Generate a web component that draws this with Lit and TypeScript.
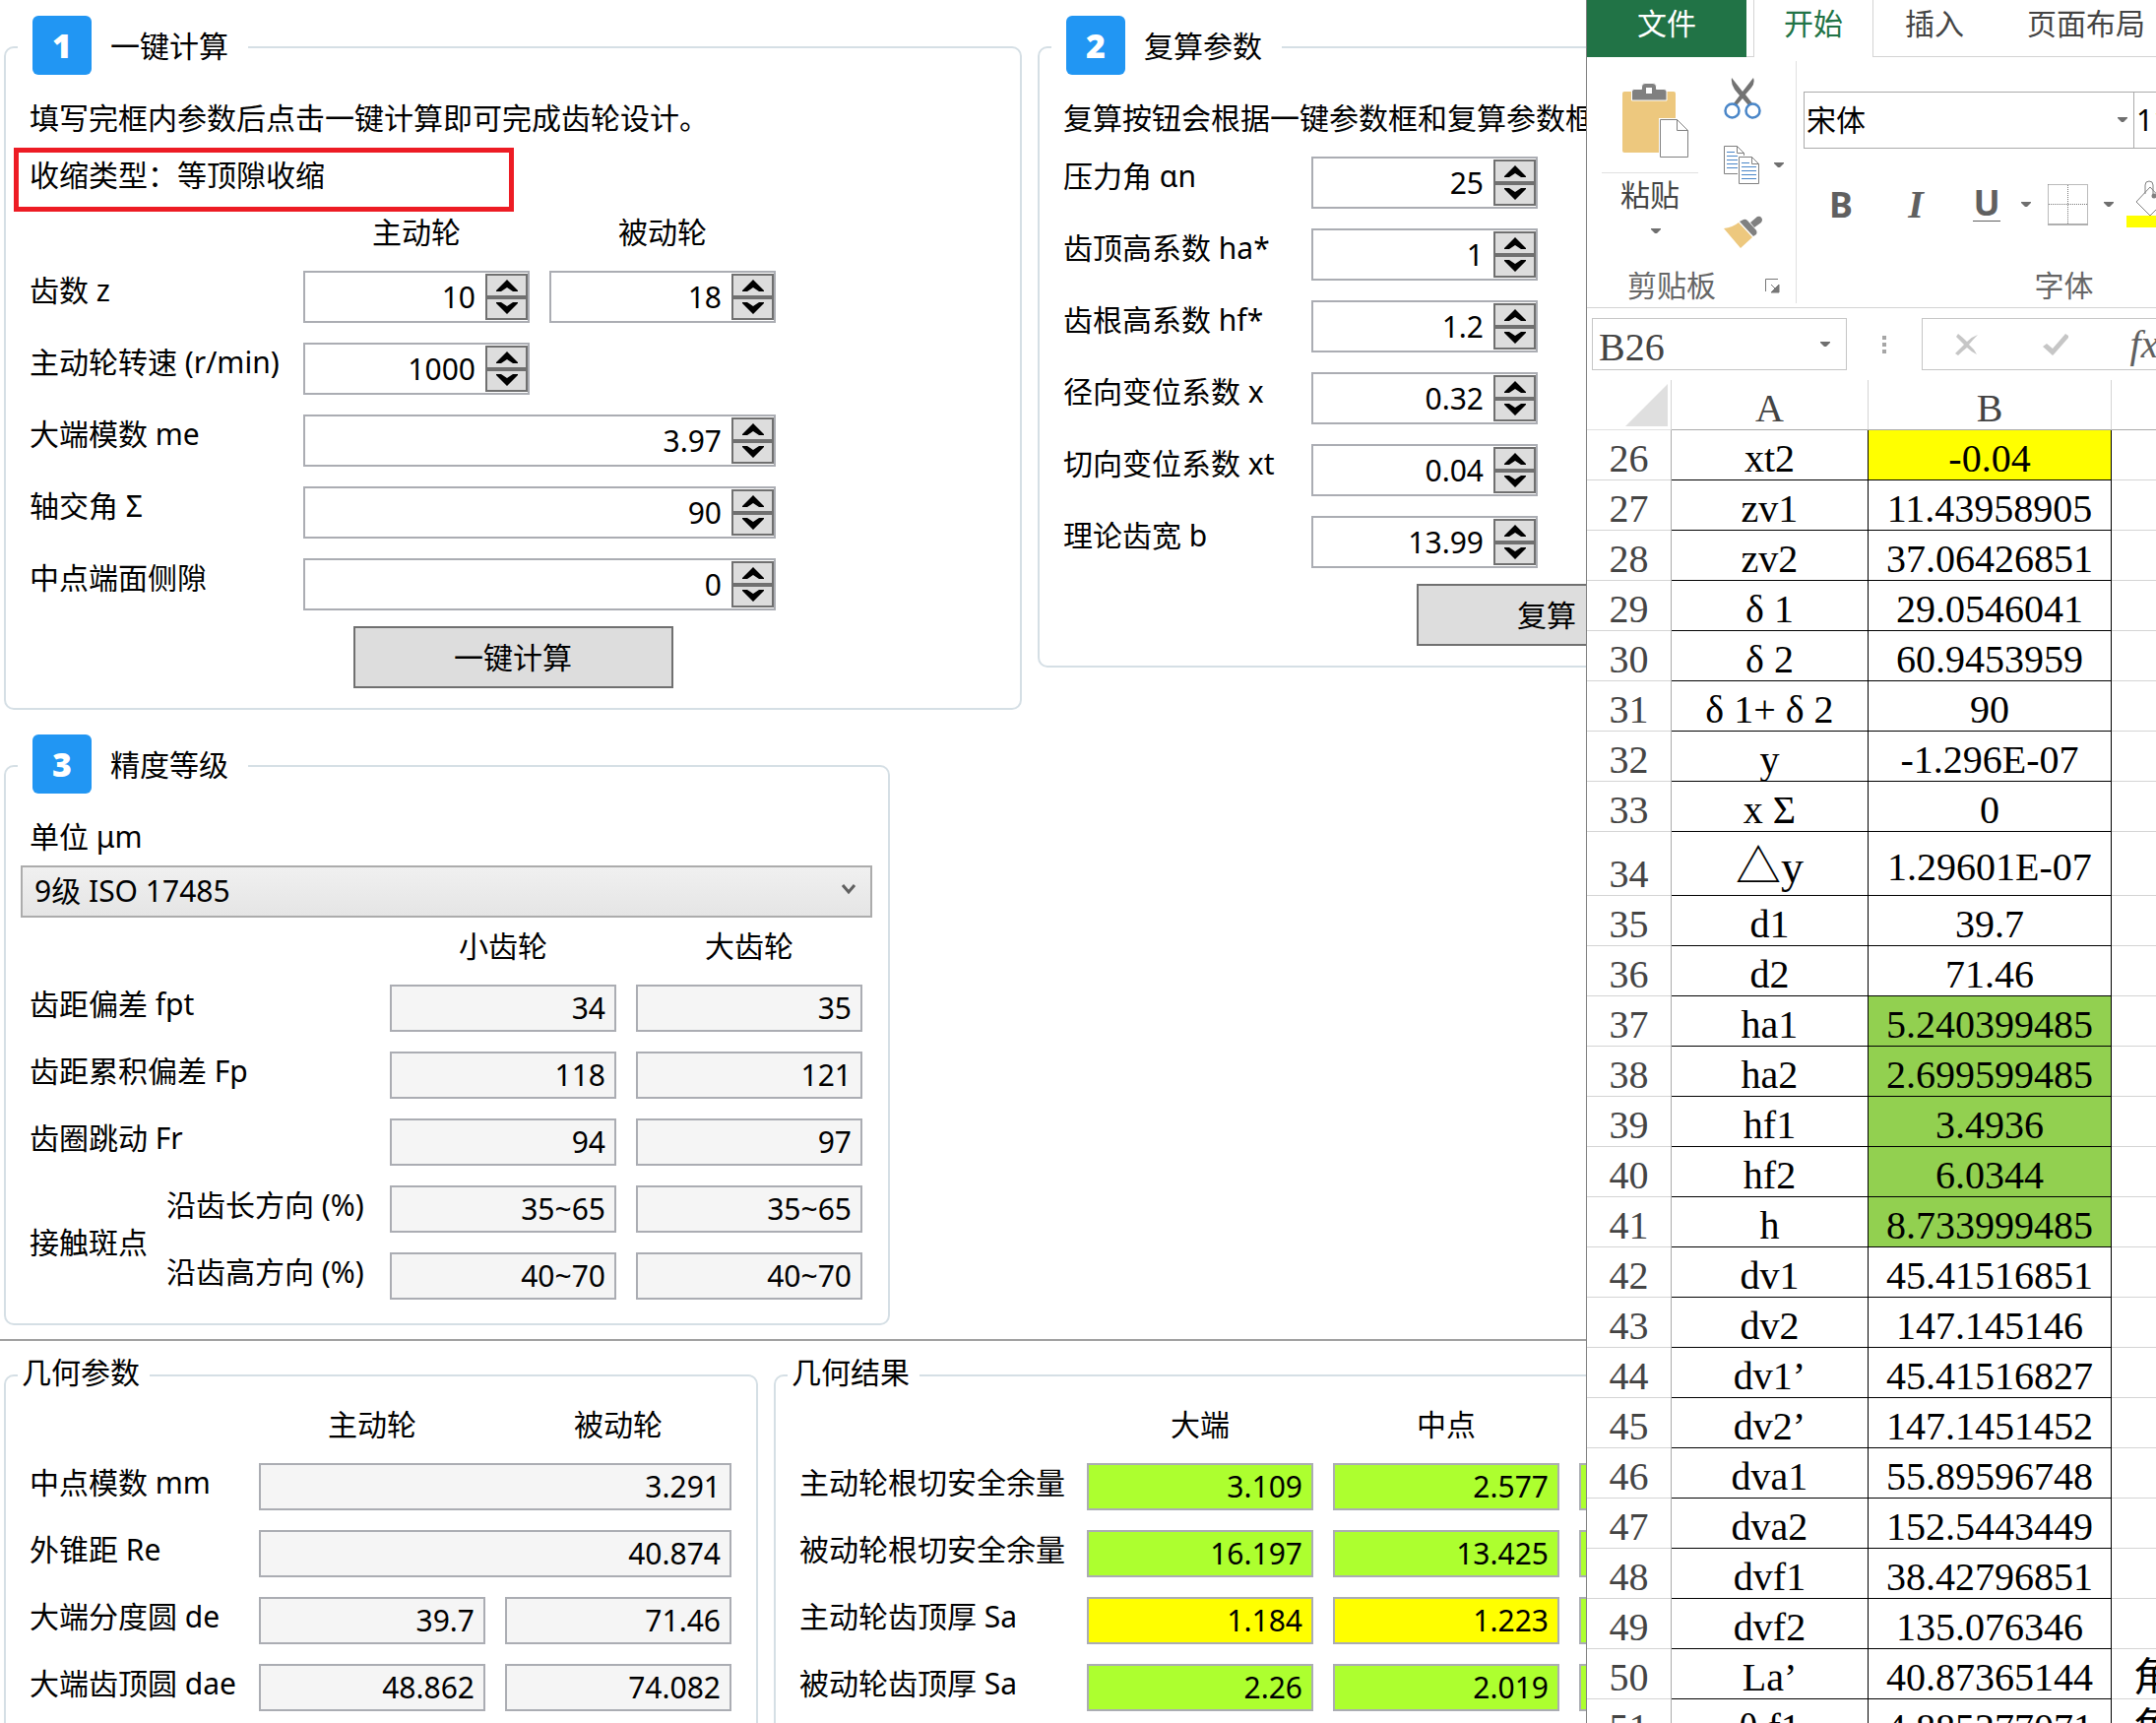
import { LitElement, html, css, svg, nothing } from "lit";
import { customElement } from "lit/decorators.js";
import { classMap } from "lit/directives/class-map.js";

type Tone = "plain" | "ok" | "warn";

interface SpinRow {
  id: string;
  label: string;
  values: string[];
  wide?: boolean;
}

interface ReadRow {
  id: string;
  label: string;
  values: string[];
  tone?: Tone;
}

interface SheetRow {
  n: number;
  name: string;
  value: string;
  fill?: "yellow" | "green";
  tall?: boolean;
  note?: string;
}

const quickRows: SpinRow[] = [
  { id: "z", label: "齿数 z", values: ["10", "18"] },
  { id: "rpm", label: "主动轮转速 (r/min)", values: ["1000"] },
  { id: "me", label: "大端模数 me", values: ["3.97"], wide: true },
  { id: "sigma", label: "轴交角 Σ", values: ["90"], wide: true },
  { id: "backlash", label: "中点端面侧隙", values: ["0"], wide: true },
];

const reviewRows: SpinRow[] = [
  { id: "an", label: "压力角 αn", values: ["25"] },
  { id: "ha", label: "齿顶高系数 ha*", values: ["1"] },
  { id: "hf", label: "齿根高系数 hf*", values: ["1.2"] },
  { id: "x", label: "径向变位系数 x", values: ["0.32"] },
  { id: "xt", label: "切向变位系数 xt", values: ["0.04"] },
  { id: "b", label: "理论齿宽 b", values: ["13.99"] },
];

const gradeRows: ReadRow[] = [
  { id: "fpt", label: "齿距偏差 fpt", values: ["34", "35"] },
  { id: "fp", label: "齿距累积偏差 Fp", values: ["118", "121"] },
  { id: "fr", label: "齿圈跳动 Fr", values: ["94", "97"] },
];

const contactRows: ReadRow[] = [
  { id: "along", label: "沿齿长方向 (%)", values: ["35~65", "35~65"] },
  { id: "high", label: "沿齿高方向 (%)", values: ["40~70", "40~70"] },
];

const geometryRows: ReadRow[] = [
  { id: "mm", label: "中点模数 mm", values: ["3.291"] },
  { id: "re", label: "外锥距 Re", values: ["40.874"] },
  { id: "de", label: "大端分度圆 de", values: ["39.7", "71.46"] },
  { id: "dae", label: "大端齿顶圆 dae", values: ["48.862", "74.082"] },
];

const resultRows: ReadRow[] = [
  { id: "cut1", label: "主动轮根切安全余量", values: ["3.109", "2.577", ""], tone: "ok" },
  { id: "cut2", label: "被动轮根切安全余量", values: ["16.197", "13.425", ""], tone: "ok" },
  { id: "sa1", label: "主动轮齿顶厚 Sa", values: ["1.184", "1.223", ""], tone: "warn" },
  { id: "sa2", label: "被动轮齿顶厚 Sa", values: ["2.26", "2.019", ""], tone: "ok" },
];

const sheetRows: SheetRow[] = [
  { n: 26, name: "xt2", value: "-0.04", fill: "yellow" },
  { n: 27, name: "zv1", value: "11.43958905" },
  { n: 28, name: "zv2", value: "37.06426851" },
  { n: 29, name: "δ 1", value: "29.0546041" },
  { n: 30, name: "δ 2", value: "60.9453959" },
  { n: 31, name: "δ 1+ δ 2", value: "90" },
  { n: 32, name: "y", value: "-1.296E-07" },
  { n: 33, name: "x Σ", value: "0" },
  { n: 34, name: "△y", value: "1.29601E-07", tall: true },
  { n: 35, name: "d1", value: "39.7" },
  { n: 36, name: "d2", value: "71.46" },
  { n: 37, name: "ha1", value: "5.240399485", fill: "green" },
  { n: 38, name: "ha2", value: "2.699599485", fill: "green" },
  { n: 39, name: "hf1", value: "3.4936", fill: "green" },
  { n: 40, name: "hf2", value: "6.0344", fill: "green" },
  { n: 41, name: "h", value: "8.733999485", fill: "green" },
  { n: 42, name: "dv1", value: "45.41516851" },
  { n: 43, name: "dv2", value: "147.145146" },
  { n: 44, name: "dv1’", value: "45.41516827" },
  { n: 45, name: "dv2’", value: "147.1451452" },
  { n: 46, name: "dva1", value: "55.89596748" },
  { n: 47, name: "dva2", value: "152.5443449" },
  { n: 48, name: "dvf1", value: "38.42796851" },
  { n: 49, name: "dvf2", value: "135.076346" },
  { n: 50, name: "La’", value: "40.87365144", note: "角" },
  { n: 51, name: "θ f1", value: "4.885277071", note: "角" },
];

const caret = html`<svg class="caret" width="10" height="6" viewBox="0 0 10 6" aria-hidden="true">
  <path d="M0 0H10V1L6 5H4L0 1Z" fill="#6f6f6f" />
</svg>`;

const base = css`
  :host {
    font-family: "Noto Sans", "Noto Sans CJK SC", sans-serif;
    font-size: 30px;
    color: #000;
  }
  *,
  *::before,
  *::after {
    box-sizing: border-box;
  }
  button,
  input,
  select {
    font: inherit;
    color: inherit;
    margin: 0;
    padding: 0;
    border: 0;
    border-radius: 0;
    background: none;
    appearance: none;
    outline: none;
  }
`;

@customElement("gear-calculator")
export class GearCalculator extends LitElement {
  static styles = [
    base,
    css`
      :host {
        display: block;
        overflow: hidden;
        background: #fff;
        white-space: nowrap;
      }
      .top {
        display: grid;
        grid-template-columns: 1034px 1034px;
        column-gap: 16px;
        row-gap: 24px;
        align-items: start;
        padding: 15px 0 14px 4px;
      }
      .bottom {
        display: grid;
        grid-template-columns: 766px 1100px;
        column-gap: 16px;
        padding: 14px 0 0 4px;
        border-top: 2px solid #a0a0a0;
      }
      fieldset {
        margin: 0;
        min-width: 0;
        padding: 0 12px 20px;
        border: 2px solid #d5dfe5;
        border-radius: 10px;
      }
      legend {
        display: flex;
        height: 66px;
        gap: 19px;
        padding: 1px 20px 0 15px;
        line-height: 62px;
      }
      .bottom legend {
        height: 42px;
        padding: 0 10px 0 4px;
        line-height: 36px;
      }
      .badge {
        width: 60px;
        height: 60px;
        border-radius: 6px;
        background: #2196f3;
        color: #fff;
        font-family: "Open Sans", "Noto Sans", sans-serif;
        font-weight: 800;
        font-size: 34px;
        line-height: 60px;
        text-align: center;
      }
      .body {
        padding: 10px 0 0 12px;
      }
      .bottom .body {
        padding-top: 0;
      }
      .bottom fieldset {
        padding-bottom: 60px;
      }
      p {
        margin: 0;
        line-height: 58px;
        height: 58px;
      }
      .kind {
        position: relative;
      }
      .kind::after {
        content: "";
        position: absolute;
        left: -16px;
        top: 1px;
        width: 508px;
        height: 65px;
        border: 5px solid #ed1c24;
      }
      .grid {
        display: grid;
        align-items: center;
      }
      .quick {
        grid-template-columns: 268px 250px 250px;
      }
      .review {
        grid-template-columns: 242px 250px;
      }
      .grade {
        grid-template-columns: 139px 217px 250px 250px;
      }
      .geometry {
        grid-template-columns: 223px 250px 250px;
      }
      .result {
        grid-template-columns: 282px 250px 250px 250px;
      }
      .head {
        height: 58px;
        line-height: 58px;
        text-align: center;
      }
      .first {
        grid-column-start: 1;
      }
      .second {
        grid-column-start: 2;
      }
      .third {
        grid-column-start: 3;
      }
      .two {
        grid-column-end: span 2;
      }
      .tallcell {
        grid-column: 1;
        grid-row: 5 / span 2;
        padding-bottom: 4px;
      }
      label {
        padding-bottom: 12px;
      }
      .quick label,
      .review label {
        padding-bottom: 18px;
      }
      .spin {
        display: flex;
        height: 53px;
        margin: 10px;
        padding: 1px 0 1px 1px;
        border: 2px solid #abadb3;
        background: #fff;
      }
      .spin input {
        flex: 1;
        min-width: 0;
        padding-right: 10px;
        text-align: right;
      }
      .steps {
        display: flex;
        flex-direction: column;
        width: 43px;
      }
      .steps button {
        display: flex;
        flex: 1;
        align-items: center;
        justify-content: center;
        min-height: 0;
        border: 2px solid #707070;
        background: #ddd;
      }
      .out {
        width: 230px;
        height: 48px;
        margin: 10px;
        padding: 0 9px 1px 0;
        border: 2px solid #abadb3;
        background: #f5f5f5;
        text-align: right;
      }
      .out.two {
        width: 480px;
      }
      .out.ok {
        background: #adff2f;
      }
      .out.warn {
        background: #ff0;
      }
      .go {
        display: block;
        width: 325px;
        height: 63px;
        margin: 6px auto 0;
        padding-bottom: 4px;
        border: 2px solid #707070;
        background: #ddd;
      }
      .actions {
        padding-right: 12px;
      }
      .go.short {
        width: 264px;
      }
      .grade-set {
        width: 900px;
        padding-bottom: 14px;
      }
      .combo {
        display: grid;
        align-items: center;
        width: 865px;
        margin-left: -9px;
      }
      .combo > * {
        grid-area: 1 / 1;
      }
      .combo select {
        height: 53px;
        padding: 0 0 2px 12px;
        border: 2px solid #acacac;
        background: linear-gradient(#f0f0f0, #e5e5e5);
      }
      .combo svg {
        justify-self: end;
        margin: 0 16px 6px 0;
        pointer-events: none;
      }
    `,
  ];

  private spin(id: string, value: string, name: string, wide = false) {
    return html`<div class=${classMap({ spin: true, two: wide })}>
      <input id=${id} type="text" inputmode="decimal" .value=${value} aria-label=${name} />
      <span class="steps">
        <button type="button" aria-label="增加">
          <svg width="22" height="12" viewBox="0 0 22 12"><path d="M11 0L22 11V12H17L11 8L5 12H0V11Z" /></svg>
        </button>
        <button type="button" aria-label="减少">
          <svg width="22" height="12" viewBox="0 0 22 12"><path d="M11 12L22 1V0H17L11 4L5 0H0V1Z" /></svg>
        </button>
      </span>
    </div>`;
  }

  private spinRow(row: SpinRow) {
    return html`<label class="first" for=${row.id + "-0"}>${row.label}</label>
      ${row.values.map((v, i) => this.spin(`${row.id}-${i}`, v, row.label, row.wide))}`;
  }

  private outputs(row: ReadRow, span = false) {
    return row.values.map((v, i) => {
      const tone = row.id === "sa1" && i === 2 ? "ok" : row.tone;
      return html`<input
        id=${`${row.id}-${i}`}
        class=${classMap({ out: true, two: span, ok: tone === "ok", warn: tone === "warn" })}
        type="text"
        readonly
        .value=${v}
        aria-label=${row.label}
      />`;
    });
  }

  private readRow(row: ReadRow, labelSpan = false, spanSingle = false) {
    return html`<label class=${classMap({ first: true, two: labelSpan })} for=${row.id + "-0"}>${row.label}</label>
      ${this.outputs(row, spanSingle && row.values.length === 1)}`;
  }

  render() {
    return html`
      <section class="top">
        <fieldset>
          <legend><span class="badge">1</span>一键计算</legend>
          <div class="body">
            <p>填写完框内参数后点击一键计算即可完成齿轮设计。</p>
            <p class="kind">收缩类型：等顶隙收缩</p>
            <div class="grid quick">
              <span class="head second">主动轮</span>
              <span class="head">被动轮</span>
              ${quickRows.map((r) => this.spinRow(r))}
            </div>
            <div class="actions"><button class="go" type="button">一键计算</button></div>
          </div>
        </fieldset>
        <fieldset>
          <legend><span class="badge">2</span>复算参数</legend>
          <div class="body">
            <p>复算按钮会根据一键参数框和复算参数框</p>
            <div class="grid review">${reviewRows.map((r) => this.spinRow(r))}</div>
            <div class="actions"><button class="go short" type="button">复算</button></div>
          </div>
        </fieldset>
        <fieldset class="grade-set">
          <legend><span class="badge">3</span>精度等级</legend>
          <div class="body">
            <p>单位 μm</p>
            <div class="combo">
              <select aria-label="精度等级">
                <option>9级 ISO 17485</option>
              </select>
              <svg width="16" height="12" viewBox="0 0 16 12" aria-hidden="true">
                <path d="M2 2L8 9L14 2" fill="none" stroke="#606060" stroke-width="3" />
              </svg>
            </div>
            <div class="grid grade">
              <span class="head third">小齿轮</span>
              <span class="head">大齿轮</span>
              ${gradeRows.map((r) => this.readRow(r, true))}
              <span class="tallcell">接触斑点</span>
              ${contactRows.map(
                (r) => html`<label class="second" for=${r.id + "-0"}>${r.label}</label>${this.outputs(r)}`
              )}
            </div>
          </div>
        </fieldset>
      </section>
      <section class="bottom">
        <fieldset>
          <legend>几何参数</legend>
          <div class="body grid geometry">
            <span class="head second">主动轮</span>
            <span class="head">被动轮</span>
            ${geometryRows.map((r) => this.readRow(r, false, true))}
          </div>
        </fieldset>
        <fieldset>
          <legend>几何结果</legend>
          <div class="body grid result">
            <span class="head second">大端</span>
            <span class="head">中点</span>
            ${resultRows.map((r) => this.readRow(r))}
          </div>
        </fieldset>
      </section>
    `;
  }
}

@customElement("sheet-window")
export class SheetWindow extends LitElement {
  static styles = [
    base,
    css`
      :host {
        display: block;
        overflow: hidden;
        border-left: 1px solid #808080;
        background: #fff;
        color: #444;
        white-space: nowrap;
      }
      .tabs {
        display: flex;
        height: 58px;
      }
      .tabs button {
        flex: none;
        padding: 0 32px 20px;
        border-bottom: 1px solid #d4d4d4;
      }
      .tabs .file {
        width: 162px;
        border: 0;
        background: #217346;
        color: #fff;
      }
      .tabs .gap {
        flex: none;
        width: 7px;
        border-bottom: 1px solid #d4d4d4;
      }
      .tabs .active {
        width: 122px;
        padding: 0 0 20px;
        border: solid #d4d4d4;
        border-width: 0 1px;
        color: #217346;
      }
      .tabs .rest {
        flex: 1;
        border-bottom: 1px solid #d4d4d4;
      }
      .ribbon {
        display: flex;
        height: 255px;
        padding: 4px 0;
        border-bottom: 1px solid #d4d4d4;
      }
      .group {
        display: flex;
        flex: none;
        flex-direction: column;
        justify-content: space-between;
        border-right: 1px solid #e1e1e1;
      }
      .clip {
        width: 213px;
      }
      .font {
        width: 544px;
      }
      .caption {
        display: flex;
        align-items: center;
        justify-content: center;
        height: 36px;
        line-height: 36px;
        color: #666;
      }
      .clip .caption {
        justify-content: flex-end;
        gap: 50px;
        padding-right: 16px;
      }
      .tools {
        display: flex;
        gap: 26px;
        padding-left: 15px;
      }
      .paste {
        display: flex;
        flex-direction: column;
        align-items: center;
        width: 98px;
        padding-top: 22px;
      }
      .paste svg {
        margin-left: 12px;
      }
      .paste .word {
        width: 98px;
        margin-top: 15px;
        margin-bottom: 12px;
        border-top: 1px solid #e1e1e1;
        line-height: 44px;
      }
      .stack {
        display: flex;
        flex-direction: column;
        align-items: flex-start;
        gap: 24px;
        padding-top: 16px;
      }
      .stack button {
        display: flex;
        align-items: center;
        gap: 14px;
        height: 44px;
      }
      .fonts {
        display: flex;
        padding: 31px 0 0 7px;
      }
      .pick {
        display: grid;
        align-items: center;
        width: 336px;
        height: 58px;
        margin-right: -1px;
        border: 1px solid #ababab;
        color: #000;
      }
      .pick > * {
        grid-area: 1 / 1;
      }
      .pick select {
        height: 56px;
        padding: 0 0 2px 2px;
      }
      .pick .caret {
        justify-self: end;
        margin-right: 6px;
        pointer-events: none;
      }
      .size {
        width: 120px;
      }
      .format {
        display: flex;
        align-items: center;
        height: 60px;
        margin-bottom: 8px;
        padding-left: 7px;
        color: #606060;
      }
      .format button {
        display: flex;
        flex: none;
        align-items: center;
        justify-content: center;
        height: 60px;
        font-size: 36px;
        font-weight: 700;
      }
      .bold,
      .italic {
        width: 76px;
      }
      .format .italic {
        font-family: "Liberation Serif", serif;
        font-style: italic;
        font-size: 40px;
      }
      .under {
        width: 68px;
      }
      .under span {
        height: 34px;
        line-height: 30px;
        border-bottom: 1px solid #606060;
      }
      .more {
        width: 12px;
      }
      .edges {
        width: 72px;
      }
      .fill {
        margin-left: 12px;
      }
      .bar {
        display: flex;
        height: 73px;
        padding: 10px 0 10px 5px;
      }
      .name {
        display: grid;
        flex: none;
        align-items: center;
        width: 259px;
        border: 1px solid #c6c6c6;
      }
      .name > * {
        grid-area: 1 / 1;
      }
      .name input {
        width: 100%;
        height: 51px;
        padding: 6px 0 0 6px;
        font-family: "Liberation Serif", serif;
        font-size: 40px;
      }
      .name .caret {
        justify-self: end;
        margin-right: 16px;
      }
      .dots {
        flex: none;
        align-self: center;
        width: 76px;
      }
      .entry {
        display: flex;
        flex: none;
        width: 400px;
        border: 1px solid #c6c6c6;
      }
      .entry button {
        display: flex;
        align-items: center;
        justify-content: center;
        width: 90px;
      }
      .entry .fx {
        color: #606060;
        font-family: "Liberation Serif", serif;
        font-style: italic;
        font-size: 40px;
        line-height: 40px;
      }
      table {
        width: 100%;
        table-layout: fixed;
        border-collapse: separate;
        border-spacing: 0;
        font-family: "Liberation Serif", "Noto Sans CJK SC", serif;
        font-size: 40px;
        line-height: 42px;
        text-align: center;
      }
      .c0 {
        width: 86px;
      }
      .c1 {
        width: 200px;
      }
      .c2 {
        width: 247px;
      }
      th,
      td {
        height: 51px;
        padding: 8px 0 0;
        border: 0 solid #d4d4d4;
        border-bottom-width: 1px;
        font-weight: 400;
      }
      thead th {
        border-right-width: 1px;
        border-bottom-color: #ababab;
      }
      thead th:last-child {
        border-right-width: 0;
      }
      thead .corner {
        padding: 4px 3px 3px 0;
        line-height: 0;
        text-align: right;
        border-bottom-color: #e1e1e1;
      }
      tbody th {
        border-right: 1px solid #ababab;
      }
      .cell {
        border-color: #000;
        border-right-width: 1px;
        color: #000;
      }
      .yellow {
        background: #ff0;
      }
      .green {
        background: #92d050;
      }
      .tall th {
        height: 65px;
        vertical-align: bottom;
      }
      .tall .symbol {
        font-size: 46px;
      }
      .note {
        padding-left: 22px;
        color: #000;
        text-align: left;
      }
    `,
  ];

  private clipboard() {
    return svg`<svg width="68" height="76" viewBox="0 0 68 76">
      <rect x="0" y="9" width="54" height="62" rx="2" fill="#edc87e" />
      <path d="M9.500 18V9Q9.500 6.500 12 6.500H19.500V4Q19.500 .5 23 .5H31Q34.500 .5 34.500 4V6.500H42Q45 6.500 45 9V18Z" fill="#808080" stroke="#fff" />
      <rect x="24" y="5" width="6" height="6" fill="#fff" />
      <path d="M37 36H56L68 48V76H37Z" fill="#fff" />
      <path d="M38.500 37.500H55.500L66.500 48.500V75.500H38.500ZM55.500 37.500V48.500H66.500" fill="#fff" stroke="#808080" />
    </svg>`;
  }

  private scissors() {
    return svg`<svg width="38" height="42" viewBox="0 0 38 42">
      <path d="M8 0Q7 6 11 12L16 18L10 26L13 28L19 21L25 28L29 26L22 17L28 10Q32 5 30 0L19 14Z" fill="#737373" />
      <circle cx="8.500" cy="33.500" r="7" fill="#fff" stroke="#4a86c8" stroke-width="2.500" />
      <circle cx="29.500" cy="33.500" r="7" fill="#fff" stroke="#4a86c8" stroke-width="2.500" />
    </svg>`;
  }

  private copy() {
    return svg`<svg width="37" height="40" viewBox="0 0 37 40">
      <path d="M.5 .5H13.500L20.500 7.500V28.500H.5ZM13.500 .5V7.500H20.500" fill="#fff" stroke="#808080" />
      <path d="M3 6.500H11M3 10.500H14M3 14.500H14M3 18.500H14M3 22.500H14" stroke="#4a86c8" />
      <path d="M14 10H30L37 17V40H14Z" fill="#fff" />
      <path d="M15.500 11.500H28.500L35.500 18.500V38.500H15.500ZM28.500 11.500V18.500H35.500" fill="#fff" stroke="#808080" />
      <path d="M18 17.500H26M18 21.500H33M18 25.500H33M18 29.500H33M18 33.500H33" stroke="#4a86c8" />
    </svg>`;
  }

  private brush() {
    return svg`<svg width="40" height="34" viewBox="0 0 40 34">
      <path d="M0 13Q9 12 15 7L29 22L17 33Z" fill="#edc87e" />
      <path d="M16 6L20 4Q22 3 24 5L33 15Q34 17 33 19L30 21Z" fill="#808080" />
      <path d="M27 7L34 1Q37 0 38 2Q40 4 38 7L31 12Z" fill="#808080" />
    </svg>`;
  }

  render() {
    return html`
      <nav class="tabs">
        <button class="file" type="button">文件</button>
        <span class="gap"></span>
        <button class="active" type="button">开始</button>
        <button type="button">插入</button>
        <button type="button">页面布局</button>
        <span class="rest"></span>
      </nav>
      <div class="ribbon">
        <div class="group clip">
          <div class="tools">
            <button class="paste" type="button">${this.clipboard()}<span class="word">粘贴</span>${caret}</button>
            <div class="stack">
              <button type="button" aria-label="剪切">${this.scissors()}</button>
              <button type="button" aria-label="复制">${this.copy()}${caret}</button>
              <button type="button" aria-label="格式刷">${this.brush()}</button>
            </div>
          </div>
          <div class="caption">
            剪贴板
            <svg width="15" height="15" viewBox="0 0 15 15" aria-hidden="true">
              <path d="M.5 13V.5H13" fill="none" stroke="#777" />
              <path d="M6 6L11 11M14 6V14H6Z" fill="#777" stroke="#777" />
            </svg>
          </div>
        </div>
        <div class="group font">
          <div class="fonts">
            <div class="pick">
              <select aria-label="字体">
                <option>宋体</option>
              </select>
              ${caret}
            </div>
            <div class="pick size">
              <select aria-label="字号">
                <option>11</option>
              </select>
            </div>
          </div>
          <div class="format">
            <button class="bold" type="button">B</button>
            <button class="italic" type="button">I</button>
            <button class="under" type="button"><span>U</span></button>
            <button class="more" type="button" aria-label="下划线选项">${caret}</button>
            <button class="edges" type="button" aria-label="边框">
              <svg width="41" height="42" viewBox="0 0 41 42">
                <path d="M.5 .5H40.500V40M.5 .5V40M20.500 1V40M1 20.500H40" fill="none" stroke="#777" stroke-dasharray="1 1" />
                <path d="M0 41H41" stroke="#606060" />
              </svg>
            </button>
            <button class="more" type="button" aria-label="边框选项">${caret}</button>
            <button class="fill" type="button" aria-label="填充颜色">
              <svg width="46" height="50" viewBox="0 0 46 50">
                <path d="M10 22L24 7L38 22L24 36Z" fill="#fff" stroke="#808080" />
                <path d="M19 14V5Q19 1 23 1Q27 1 27 5V15" fill="none" stroke="#808080" />
                <circle cx="28" cy="16" r="2.500" fill="#808080" />
                <rect x="0" y="36" width="46" height="12" fill="#ff0" />
              </svg>
            </button>
          </div>
          <div class="caption">字体</div>
        </div>
      </div>
      <div class="bar">
        <div class="name"><input type="text" aria-label="名称框" .value=${"B26"} />${caret}</div>
        <svg class="dots" height="18" viewBox="0 0 76 18" aria-hidden="true">
          <path d="M36 0h4v4h-4ZM36 7h4v4h-4ZM36 14h4v4h-4Z" fill="#a6a6a6" />
        </svg>
        <div class="entry">
          <button type="button" aria-label="取消">
            <svg width="24" height="22" viewBox="0 0 24 22">
              <path d="M3 0Q8 4 12 8Q17 3 23 1Q18 6 14 11Q19 15 22 21Q16 18 12 14Q8 17 3 22L0 20Q5 15 9 11Q5 7 1 3Z" fill="#c6c6c6" />
            </svg>
          </button>
          <button type="button" aria-label="输入">
            <svg width="26" height="22" viewBox="0 0 26 22">
              <path d="M0 13L4 10L10 15L23 0L26 2V4L12 20L10 22Z" fill="#c6c6c6" />
            </svg>
          </button>
          <button class="fx" type="button">fx</button>
        </div>
      </div>
      <table>
        <colgroup>
          <col class="c0" />
          <col class="c1" />
          <col class="c2" />
          <col />
        </colgroup>
        <thead>
          <tr>
            <th class="corner">
              <svg width="43" height="43" viewBox="0 0 43 43" aria-hidden="true">
                <path d="M43 0V43H0Z" fill="#dfdfdf" />
              </svg>
            </th>
            <th scope="col">A</th>
            <th scope="col">B</th>
            <th></th>
          </tr>
        </thead>
        <tbody>
          ${sheetRows.map(
            (r) => html`<tr class=${r.tall ? "tall" : nothing}>
              <th scope="row">${r.n}</th>
              <td class="cell symbol">${r.name}</td>
              <td class=${classMap({ cell: true, yellow: r.fill === "yellow", green: r.fill === "green" })}>${r.value}</td>
              <td class="note">${r.note ?? nothing}</td>
            </tr>`
          )}
        </tbody>
      </table>
    `;
  }
}

@customElement("app-root")
export class AppRoot extends LitElement {
  static styles = css`
    :host {
      display: grid;
      grid-template-columns: minmax(0, 1fr) 579px;
      height: 100vh;
      overflow: hidden;
    }
  `;

  render() {
    return html`<gear-calculator></gear-calculator><sheet-window></sheet-window>`;
  }
}
